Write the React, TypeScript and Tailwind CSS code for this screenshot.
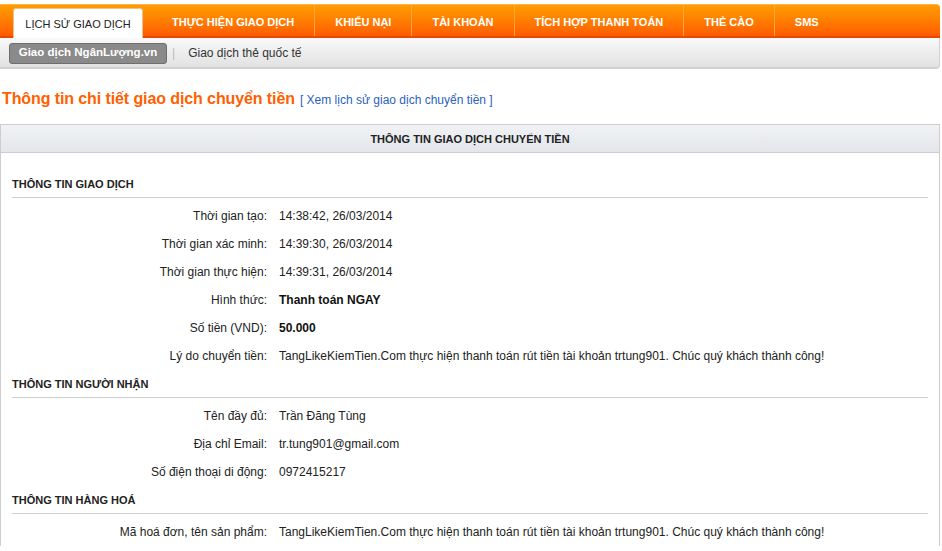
import React from 'react';

const tabs = ['THỰC HIỆN GIAO DỊCH', 'KHIẾU NẠI', 'TÀI KHOẢN', 'TÍCH HỢP THANH TOÁN', 'THẺ CÀO', 'SMS'];

type Row = { label: string; value: string; bold?: boolean };

const sections: { title: string; rows: Row[] }[] = [
  {
    title: 'THÔNG TIN GIAO DỊCH',
    rows: [
      { label: 'Thời gian tạo:', value: '14:38:42, 26/03/2014' },
      { label: 'Thời gian xác minh:', value: '14:39:30, 26/03/2014' },
      { label: 'Thời gian thực hiện:', value: '14:39:31, 26/03/2014' },
      { label: 'Hình thức:', value: 'Thanh toán NGAY', bold: true },
      { label: 'Số tiền (VND):', value: '50.000', bold: true },
      {
        label: 'Lý do chuyển tiền:',
        value: 'TangLikeKiemTien.Com thực hiện thanh toán rút tiền tài khoản trtung901. Chúc quý khách thành công!',
      },
    ],
  },
  {
    title: 'THÔNG TIN NGƯỜI NHẬN',
    rows: [
      { label: 'Tên đầy đủ:', value: 'Trần Đăng Tùng' },
      { label: 'Địa chỉ Email:', value: 'tr.tung901@gmail.com' },
      { label: 'Số điện thoại di động:', value: '0972415217' },
    ],
  },
  {
    title: 'THÔNG TIN HÀNG HOÁ',
    rows: [
      {
        label: 'Mã hoá đơn, tên sản phẩm:',
        value: 'TangLikeKiemTien.Com thực hiện thanh toán rút tiền tài khoản trtung901. Chúc quý khách thành công!',
      },
    ],
  },
];

const App = () => {
  return (
    <div className="w-[942px] h-[551px] overflow-hidden bg-white text-[12px] text-[#222] font-['Liberation_Sans',Arial,sans-serif]">
      {/* Top nav */}
      <div className="pt-[4px] pr-[2px]">
        <div className="h-[34px] flex items-end pl-[13px] rounded-tr-[4px] border-t border-[#ffb347] border-b-2 border-b-[#e84800] bg-gradient-to-b from-[#ff9c00] to-[#ff5a00]">
          <div className="h-[30px] w-[130px] -mb-[2px] pt-[2px] bg-white rounded-t-[3px] border border-b-0 border-[#f0c090] flex items-center justify-center text-[#222] text-[11px]">
            LỊCH SỬ GIAO DỊCH
          </div>
          <div className="flex h-full ml-[5px]">
            {tabs.map((t, i) => (
              <div key={t} className={`flex items-center h-full pt-[4px] px-[20px] text-white font-bold text-[11px] ${i > 0 ? 'border-l border-[#ffa640]' : 'pl-[24px]'}`}>
                {t}
              </div>
            ))}
          </div>
        </div>
        {/* Sub nav */}
        <div className="h-[31px] pt-[1px] flex items-center pl-[9px] rounded-br-[4px] border-b-2 border-r border-[#d2d2d2] bg-gradient-to-b from-[#f9f9f9] to-[#e2e2e2]">
          <div className="h-[21px] w-[158px] flex items-center justify-center rounded-[3px] bg-[#8a8a8a] border border-[#6e6e6e] text-white font-bold text-[11.5px]">
            Giao dịch NgânLượng.vn
          </div>
          <span className="ml-[5px] text-[#bbb]">|</span>
          <span className="text-[#333] ml-[13px]">Giao dịch thẻ quốc tế</span>
        </div>
      </div>

      {/* Title */}
      <div className="mt-[18px] pl-[2px] flex items-baseline gap-[5px]">
        <h1 className="text-[16px] font-bold text-[#ff6000] tracking-[-0.1px]">Thông tin chi tiết giao dịch chuyển tiền</h1>
        <a className="text-[12px] text-[#2b5fbe]">[ Xem lịch sử giao dịch chuyển tiền ]</a>
      </div>

      {/* Detail box */}
      <div className="mt-[13px] mr-[2px] border border-[#cdcdcd] border-b-0">
        <div className="h-[28px] pt-[2px] flex items-center justify-center font-bold text-[11px] text-[#222] border-b border-[#cdcdcd] bg-gradient-to-b from-[#f0f2f5] to-[#e3e6ea]">
          THÔNG TIN GIAO DỊCH CHUYỂN TIỀN
        </div>
        <div className="px-[11px] pt-[17px]">
          {sections.map(s => (
            <div key={s.title}>
              <div className="h-[28px] pt-[2px] flex items-center border-b border-[#cfcfcf] font-bold text-[11px] text-[#222]">{s.title}</div>
              <div className="pt-[4px]">
                {s.rows.map(r => (
                  <div key={r.label} className="h-[28px] flex items-center">
                    <div className="w-[267px] text-right pr-[12px] text-[#222]">{r.label}</div>
                    <div className={r.bold ? 'font-bold text-[#111]' : 'text-[#222]'}>{r.value}</div>
                  </div>
                ))}
              </div>
            </div>
          ))}
        </div>
      </div>
    </div>
  );
};

export default App;
